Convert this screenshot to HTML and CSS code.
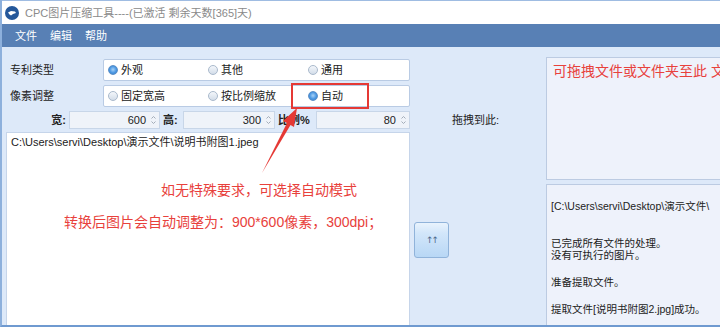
FILE: index.html
```html
<!DOCTYPE html>
<html lang="zh-CN">
<head>
    <meta charset="UTF-8">
    <title>CPC图片压缩工具</title>
    <link rel="stylesheet" href="styles.css">
</head>
<body>
    <div class="window">
        <div class="titlebar">
            <svg class="app-icon" width="14" height="14" viewBox="0 0 14 14">
                <circle cx="7" cy="7" r="7" fill="#24579a"/>
                <path d="M3 6.5 L6 5 L10 5.5 L11 7 L8 8 L6 9.5 L4.5 8.5 Z" fill="#ffffff"/>
            </svg>
            <span class="title-text">CPC图片压缩工具----(已激活 剩余天数[365]天)</span>
        </div>
        <div class="menubar">
            <span class="menu-item">文件</span>
            <span class="menu-item">编辑</span>
            <span class="menu-item">帮助</span>
        </div>

        <div class="main">
            <div class="left-col">
                <div class="option-row">
                    <span class="row-label">专利类型</span>
                    <div class="radio-group">
                        <label class="radio checked"><i class="dot"></i>外观</label>
                        <label class="radio"><i class="dot"></i>其他</label>
                        <label class="radio"><i class="dot"></i>通用</label>
                    </div>
                </div>
                <div class="option-row">
                    <span class="row-label">像素调整</span>
                    <div class="radio-group">
                        <label class="radio"><i class="dot"></i>固定宽高</label>
                        <label class="radio"><i class="dot"></i>按比例缩放</label>
                        <label class="radio checked"><i class="dot"></i>自动</label>
                    </div>
                </div>
                <div class="size-row">
                    <span class="size-label right">宽:</span>
                    <div class="spin">
                        <span>600</span>
                        <svg class="carets" width="5" height="10" viewBox="0 0 5 10"><path d="M0.5 3.5 L2.5 1.5 L4.5 3.5 M0.5 6.5 L2.5 8.5 L4.5 6.5" fill="none" stroke="#a3adb9" stroke-width="1"/></svg>
                    </div>
                    <span class="size-label">高:</span>
                    <div class="spin">
                        <span>300</span>
                        <svg class="carets" width="5" height="10" viewBox="0 0 5 10"><path d="M0.5 3.5 L2.5 1.5 L4.5 3.5 M0.5 6.5 L2.5 8.5 L4.5 6.5" fill="none" stroke="#a3adb9" stroke-width="1"/></svg>
                    </div>
                    <span class="size-label">比例%</span>
                    <div class="spin">
                        <span>80</span>
                        <svg class="carets" width="5" height="10" viewBox="0 0 5 10"><path d="M0.5 3.5 L2.5 1.5 L4.5 3.5 M0.5 6.5 L2.5 8.5 L4.5 6.5" fill="none" stroke="#a3adb9" stroke-width="1"/></svg>
                    </div>
                </div>
                <div class="file-list">
                    <div class="file-path">C:\Users\servi\Desktop\演示文件\说明书附图1.jpeg</div>
                    <div class="note note-first">如无特殊要求，可选择自动模式</div>
                    <div class="note note-second">转换后图片会自动调整为：900*600像素，300dpi；</div>
                </div>
            </div>

            <div class="mid-col">
                <span class="drop-label">拖拽到此:</span>
                <button class="move-button">↑↑</button>
            </div>

            <div class="right-col">
                <div class="drop-zone">可拖拽文件或文件夹至此 文</div>
                <div class="log">
                    <div class="log-line first">[C:\Users\servi\Desktop\演示文件\</div>
                    <div class="log-line gap-lg">已完成所有文件的处理。</div>
                    <div class="log-line">没有可执行的图片。</div>
                    <div class="log-line gap-md">准备提取文件。</div>
                    <div class="log-line gap-md">提取文件[说明书附图2.jpg]成功。</div>
                </div>
            </div>
        </div>

        <svg class="annotation" width="720" height="327" viewBox="0 0 720 327">
            <rect x="292" y="84" width="76" height="24" fill="none" stroke="#e53935" stroke-width="2"/>
            <polygon points="297,108 294,127 290.5,125 262,173 287,123 283,121" fill="#e53935"/>
        </svg>
    </div>
</body>
</html>
```

FILE: styles.css
```css
:root {
    --body-bg: #dde9f9;
    --menu-bg: #5880b5;
    --box-border: #b9cbe4;
    --soft-bg: #eef2fb;
    --note-red: #e8413c;
    --text-dark: #222222;
}

* {
    box-sizing: border-box;
}

body {
    margin: 0;
    font-family: "Liberation Sans", "Noto Sans CJK SC", sans-serif;
    font-size: 11px;
    color: var(--text-dark);
}

.window {
    position: relative;
    width: 720px;
    height: 327px;
    background-color: var(--body-bg);
    border-left: 2px solid #8db0dc;
    border-bottom: 2px solid #6f9ad0;
    overflow: hidden;
}

.titlebar {
    height: 24px;
    background-color: #ffffff;
    border-top: 1px solid #9fbce2;
    display: flex;
    align-items: center;
    padding-left: 3px;
    gap: 6px;
}

.title-text {
    color: #8a8a8a;
    font-size: 11px;
    line-height: 14px;
}

.menubar {
    height: 23px;
    background-color: var(--menu-bg);
    display: flex;
    align-items: center;
    padding-left: 13px;
    gap: 13px;
}

.menu-item {
    color: #ffffff;
    font-size: 11px;
    line-height: 14px;
}

.main {
    display: flex;
    height: 278px;
}

.left-col {
    width: 408px;
    padding: 12px 0 0 4px;
    display: flex;
    flex-direction: column;
}

.option-row {
    display: flex;
    height: 22px;
    margin-bottom: 4px;
}

.row-label {
    width: 97px;
    padding-left: 4px;
    line-height: 22px;
}

.radio-group {
    flex: 1;
    display: flex;
    background-color: #ffffff;
    border: 1px solid var(--box-border);
    border-radius: 2px;
    padding-left: 4px;
}

.radio {
    width: 100px;
    display: flex;
    align-items: center;
    gap: 3px;
    line-height: 20px;
}

.dot {
    width: 10px;
    height: 10px;
    border-radius: 50%;
    border: 1px solid #a9b9cc;
    background: linear-gradient(#f4f7fb, #d3dde9);
}

.radio.checked .dot {
    border-color: #5b8fc7;
    background: radial-gradient(circle at 50% 45%, #a8d2f7 0, #4a97e2 55%, #3a7fc8 100%);
}

.size-row {
    display: grid;
    grid-template-columns: 63px 91px 23px 92px 41px 1fr;
    align-items: center;
    height: 20px;
    margin-top: -1px;
}

.size-label {
    font-weight: bold;
    padding-left: 3px;
    line-height: 18px;
}

.size-label.right {
    text-align: right;
    padding: 0 3px 0 0;
}

.spin {
    height: 18px;
    border: 1px solid #c8d6e8;
    background-color: #eff3f9;
    display: flex;
    align-items: center;
    justify-content: flex-end;
    padding-right: 3px;
    gap: 5px;
}

.file-list {
    flex: 1;
    margin-top: 2px;
    background-color: #ffffff;
    border: 1px solid #c6d5ea;
    border-bottom: none;
    padding: 2px 0 0 4px;
}

.file-path {
    line-height: 14px;
}

.note {
    color: var(--note-red);
    font-size: 14px;
    line-height: 18px;
}

.note-first {
    margin: 32px 0 0 150px;
}

.note-second {
    margin: 14px 0 0 53px;
}

.mid-col {
    width: 136px;
    display: flex;
    flex-direction: column;
    align-items: flex-start;
    padding-top: 65px;
}

.drop-label {
    margin-left: 42px;
    line-height: 16px;
}

.move-button {
    margin: 94px 0 0 4px;
    width: 35px;
    height: 36px;
    border: 1px solid #90b3da;
    border-radius: 3px;
    background: linear-gradient(#e9f3fd 0, #d2e6fa 30%, #b8d7f5 100%);
    color: #4d6a8c;
    font-size: 9px;
    letter-spacing: -2px;
    padding: 0;
    font-family: "DejaVu Sans", sans-serif;
}

.right-col {
    flex: 1;
    display: flex;
    flex-direction: column;
    padding-top: 10px;
    gap: 4px;
    overflow: hidden;
}

.drop-zone {
    height: 123px;
    background-color: var(--soft-bg);
    border: 1px solid #bccbe2;
    border-right: none;
    color: var(--note-red);
    font-size: 14px;
    line-height: 18px;
    padding: 4px 0 0 6px;
    white-space: nowrap;
}

.log {
    flex: 1;
    background-color: var(--soft-bg);
    border: 1px solid #bccbe2;
    border-right: none;
    border-bottom: none;
    padding: 15px 0 0 4px;
    white-space: nowrap;
    font-size: 10.5px;
}

.log-line {
    line-height: 12px;
}

.gap-lg {
    margin-top: 25px;
}

.gap-md {
    margin-top: 15px;
}

.annotation {
    position: absolute;
    left: -2px;
    top: 0;
    pointer-events: none;
}
```
